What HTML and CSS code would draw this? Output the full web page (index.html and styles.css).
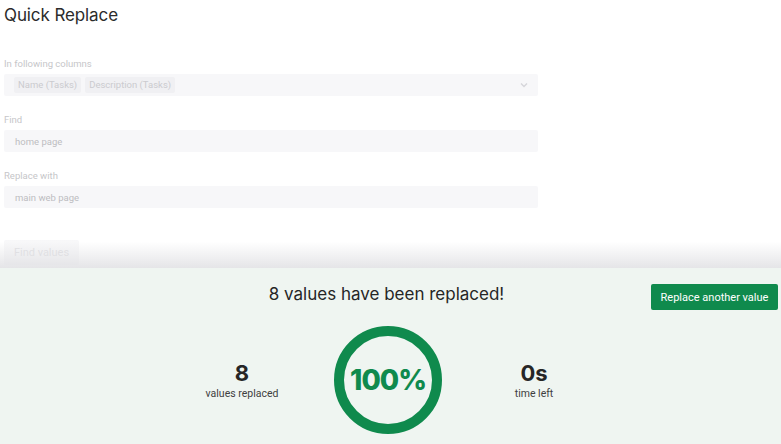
FILE: index.html
```html
<!DOCTYPE html>
<html lang="en">

<head>
    <meta charset="UTF-8">
    <meta name="viewport" content="width=device-width, initial-scale=1.0">
    <title>Quick Replace</title>
    <link rel="stylesheet" href="styles.css">
</head>

<body>
    <div class="app">
        <div class="editor">
            <h1>Quick Replace</h1>

            <label class="field-label">In following columns</label>
            <div class="select">
                <span class="chip">Name (Tasks)</span>
                <span class="chip">Description (Tasks)</span>
                <svg class="chevron" width="8" height="6" viewBox="0 0 8 6">
                    <path d="M1 1.5 L4 4.5 L7 1.5" fill="none" stroke="#d6d6da" stroke-width="1.4" />
                </svg>
            </div>

            <label class="field-label">Find</label>
            <div class="input">home page</div>

            <label class="field-label">Replace with</label>
            <div class="input">main web page</div>

            <button class="find-btn">Find values</button>
        </div>

        <div class="result">
            <div class="result-head">
                <span></span>
                <h2>8 values have been replaced!</h2>
                <button class="again-btn">Replace another value</button>
            </div>

            <div class="stats">
                <div class="stat">
                    <div class="stat-num">8</div>
                    <div class="stat-label">values replaced</div>
                </div>
                <div class="ring">100%</div>
                <div class="stat">
                    <div class="stat-num">0s</div>
                    <div class="stat-label">time left</div>
                </div>
            </div>
        </div>
    </div>
</body>

</html>
```

FILE: styles.css
```css
body {
    margin: 0;
    font-family: Roboto, "Liberation Sans", Arial, sans-serif;
    background-color: #fff;
}

.app {
    display: flex;
    flex-direction: column;
    height: 444px;
    overflow: hidden;
}

.editor {
    height: 268px;
    padding-left: 4px;
    width: 538px;
    box-sizing: border-box;
}

h1 {
    margin: 3px 0 30px;
    font-family: Inter, "Noto Sans", sans-serif;
    font-size: 17px;
    font-weight: 400;
    line-height: 24px;
    color: #2b2b2b;
    letter-spacing: -0.1px;
}

.field-label {
    display: block;
    font-size: 9.5px;
    line-height: 14px;
    color: #c6c6c9;
    margin-bottom: 3px;
}

.select,
.input {
    height: 22px;
    background-color: #f7f7f9;
    border-radius: 2px;
    margin-bottom: 17px;
    display: flex;
    align-items: center;
    box-sizing: border-box;
}

.select {
    padding: 0 10px;
    gap: 4px;
}

.chip {
    background-color: #f0f0f3;
    color: #cbcbcf;
    font-size: 9.5px;
    line-height: 16px;
    padding: 0 4px;
    border-radius: 2px;
}

.chevron {
    margin-left: auto;
}

.input {
    padding-left: 11px;
    font-size: 9.5px;
    color: #bdbdc1;
}

.find-btn {
    margin-top: 15px;
    width: 75px;
    height: 25px;
    border: none;
    border-radius: 2px;
    background-color: #f4f4f6;
    color: #cfcfd3;
    font-family: Roboto, sans-serif;
    font-size: 11px;
}

.result {
    flex: 1;
    position: relative;
    background-color: #eff5f1;
    padding-top: 14px;
}

.result::before {
    content: "";
    position: absolute;
    left: 0;
    right: 0;
    bottom: 100%;
    height: 48px;
    background: linear-gradient(to bottom, rgba(255, 255, 255, 0), rgba(255, 255, 255, 0.35) 45%, rgba(226, 226, 229, 0.9));
}

.result-head {
    display: grid;
    grid-template-columns: 1fr auto 1fr;
    align-items: start;
    padding-right: 3px;
}

h2 {
    margin: 0;
    font-family: Inter, "Noto Sans", sans-serif;
    font-size: 17px;
    font-weight: 400;
    line-height: 24px;
    color: #262626;
    padding-right: 5px;
}

.again-btn {
    justify-self: end;
    margin-top: 2px;
    width: 127px;
    height: 26px;
    border: none;
    border-radius: 2px;
    background-color: #0f8a4d;
    color: #fff;
    font-family: Roboto, sans-serif;
    font-size: 11px;
}

.stats {
    display: flex;
    justify-content: center;
    align-items: center;
    gap: 42px;
    margin-top: 16px;
    padding-right: 5px;
}

.stat {
    width: 100px;
    text-align: center;
}

.stat-num {
    font-family: Inter, "Noto Sans", sans-serif;
    font-size: 22px;
    font-weight: 700;
    line-height: 26px;
    color: #262626;
}

.stat-label {
    margin-top: 1px;
    font-size: 10.5px;
    line-height: 14px;
    color: #404040;
}

.ring {
    width: 108px;
    height: 108px;
    box-sizing: border-box;
    border: 10px solid #0f8a4d;
    border-radius: 50%;
    display: flex;
    align-items: center;
    justify-content: center;
    font-family: Inter, "Noto Sans", sans-serif;
    font-size: 28px;
    font-weight: 800;
    color: #0f8a4d;
    letter-spacing: -1px;
}
```
